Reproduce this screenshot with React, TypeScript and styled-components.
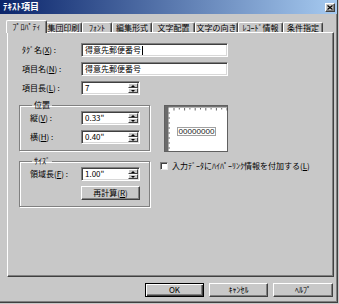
import React from 'react';
import styled, { createGlobalStyle, css } from 'styled-components';

const Global = createGlobalStyle`
  html, body { margin: 0; padding: 0; background: #c8c8c8; }
  body {
    font-family: "Noto Sans CJK JP", "Noto Sans", sans-serif;
    font-size: 8px;
    color: #000;
  }
  * { box-sizing: border-box; }
`;

const raised = css`
  border: 1px solid;
  border-color: #fff #404040 #404040 #fff;
  box-shadow: inset -1px -1px 0 #808080;
`;

const sunken = css`
  border: 1px solid;
  border-color: #808080 #fff #fff #808080;
  box-shadow: inset 1px 1px 0 #404040, inset -1px -1px 0 #d8d8d8;
`;

const Window = styled.div`
  width: 338px;
  height: 303px;
  background: #c8c8c8;
  display: flex;
  flex-direction: column;
  border-right: 1px solid #404040;
  border-bottom: 1px solid #404040;
  box-shadow: inset -1px -1px 0 #808080;
  overflow: hidden;
`;

const TitleBar = styled.div`
  height: 14px;
  flex: none;
  background: linear-gradient(to right, #0a246a, #a6caf0);
  display: flex;
  align-items: center;
  justify-content: space-between;
  padding: 0 2px 0 3px;
`;

const TitleText = styled.span`
  color: #fff;
  font-weight: bold;
  font-size: 9px;
  line-height: 12px;
`;

const CloseButton = styled.div`
  width: 10px;
  height: 9px;
  background: #c8c8c8;
  ${raised};
  display: flex;
  align-items: center;
  justify-content: center;
`;

const Body = styled.div`
  display: flex;
  flex-direction: column;
  padding: 6px 0 0 7px;
`;

const TabRow = styled.div`
  display: flex;
  align-items: flex-end;
  height: 12px;
  padding-left: 1px;
  position: relative;
  z-index: 1;
`;

const Tab = styled.div<{ $w: number; $active?: boolean }>`
  width: ${(p) => p.$w}px;
  height: 10px;
  flex: none;
  background: #c8c8c8;
  border-top: 1px solid #fff;
  border-left: 1px solid #fff;
  border-right: 1px solid #404040;
  box-shadow: inset -1px 0 0 #808080;
  border-radius: 2px 2px 0 0;
  display: flex;
  align-items: center;
  justify-content: center;
  line-height: 9px;
  white-space: nowrap;
  ${(p) =>
    p.$active &&
    css`
      width: ${p.$w + 4}px;
      margin: 0 -2px -1px;
      height: 13px;
      padding-bottom: 1px;
      position: relative;
      z-index: 2;
    `}
`;

const Panel = styled.div`
  width: 327px;
  height: 245px;
  ${raised};
  padding: 10px 0 0 11px;
  display: flex;
  flex-direction: column;
`;

const TopRows = styled.div`
  display: grid;
  grid-template-columns: 59px 147px;
  grid-auto-rows: 14px;
  row-gap: 5px;
  padding-left: 3px;
  align-items: center;
`;

const Label = styled.span`
  line-height: 10px;
  white-space: nowrap;
`;

const TextBox = styled.div<{ $w?: number }>`
  width: ${(p) => (p.$w ? `${p.$w}px` : '100%')};
  height: 14px;
  background: #fff;
  ${sunken};
  padding: 0 0 0 3px;
  display: flex;
  align-items: center;
  line-height: 10px;
  white-space: nowrap;
  overflow: hidden;
`;

const Caret = styled.span`
  display: inline-block;
  width: 1px;
  height: 9px;
  background: #000;
  margin-left: 1px;
`;

const SpinText = styled.span`
  flex: 1;
`;

const SpinCol = styled.div`
  width: 10px;
  height: 10px;
  margin-right: 1px;
  display: flex;
  flex-direction: column;
`;

const SpinBtn = styled.div<{ $down?: boolean }>`
  height: 5px;
  background: #c8c8c8;
  border: 1px solid;
  border-color: #fff #404040 #404040 #fff;
  display: flex;
  align-items: center;
  justify-content: center;
  &::after {
    content: '';
    width: 0;
    height: 0;
    border-left: 2px solid transparent;
    border-right: 2px solid transparent;
    ${(p) =>
      p.$down
        ? css`border-top: 2px solid #000;`
        : css`border-bottom: 2px solid #000;`}
  }
`;

const Lower = styled.div`
  display: grid;
  grid-template-columns: 131px auto;
  column-gap: 10px;
  row-gap: 4px;
  margin-top: 5px;
  align-items: start;
`;

const Group = styled.fieldset`
  margin: 0;
  min-width: 0;
  width: 131px;
  border: 1px solid #808080;
  box-shadow: 1px 1px 0 #fff, inset 1px 1px 0 #fff;
  padding: 1px 0 6px 10px;
  display: grid;
  grid-template-columns: 51px 59px;
  grid-auto-rows: 14px;
  row-gap: 5px;
  align-items: center;
`;

const Legend = styled.legend`
  padding: 0 2px;
  margin-left: 2px;
  line-height: 10px;
  height: 10px;
`;

const Button = styled.div<{ $w: number; $default?: boolean }>`
  width: ${(p) => p.$w}px;
  height: 14px;
  background: #c8c8c8;
  ${raised};
  display: flex;
  align-items: center;
  justify-content: center;
  line-height: 10px;
  white-space: nowrap;
  ${(p) =>
    p.$default &&
    css`
      border-color: #000;
      box-shadow: inset 1px 1px 0 #fff, inset -1px -1px 0 #404040, inset -2px -2px 0 #808080;
    `}
`;

const PreviewBox = styled.div`
  margin: 5px 0 0 4px;
  width: 64px;
  height: 47px;
  display: flex;
`;

const CheckRow = styled.label`
  margin-top: 5px;
  display: flex;
  align-items: center;
  gap: 4px;
  line-height: 10px;
  white-space: nowrap;
`;

const CheckBox = styled.span`
  width: 8px;
  height: 8px;
  flex: none;
  background: #fff;
  border: 1px solid;
  border-color: #808080 #e8e8e8 #e8e8e8 #808080;
  box-shadow: inset 1px 1px 0 #404040;
`;

const ButtonRow = styled.div`
  display: flex;
  justify-content: flex-end;
  gap: 5px;
  margin-top: 6px;
  width: 326px;
`;

const tabs = [
  { label: 'ﾌﾟﾛﾊﾟﾃｨ', w: 37, active: true },
  { label: '集団印刷', w: 37 },
  { label: 'ﾌｫﾝﾄ', w: 30 },
  { label: '編集形式', w: 40 },
  { label: '文字配置', w: 43 },
  { label: '文字の向き', w: 43 },
  { label: 'ﾚｺｰﾄﾞ情報', w: 45 },
  { label: '条件指定', w: 40 },
];

function Acc({ pre, k }: { pre: string; k: string }) {
  return (
    <Label>
      {pre}(<u>{k}</u>) :
    </Label>
  );
}

function Spin({ value }: { value: string }) {
  return (
    <TextBox $w={59}>
      <SpinText>{value}</SpinText>
      <SpinCol>
        <SpinBtn />
        <SpinBtn $down />
      </SpinCol>
    </TextBox>
  );
}

function Preview() {
  const topTicks = Array.from({ length: 11 }, (_, i) => 10 + i * 5.3);
  const leftTicks = Array.from({ length: 8 }, (_, i) => 8 + i * 5);
  return (
    <svg width="64" height="47" viewBox="0 0 64 47">
      <rect x="0.5" y="0.5" width="63" height="46" fill="#fff" stroke="#606060" />
      <rect x="1" y="1" width="62" height="1.5" fill="#707070" />
      <rect x="1" y="1" width="3.5" height="45" fill="#6a6a6a" />
      {topTicks.map((x, i) => (
        <line key={i} x1={x} y1="3" x2={x} y2={i % 2 ? 4.5 : 5.5} stroke="#404040" strokeWidth="0.8" />
      ))}
      {leftTicks.map((y, i) => (
        <line key={i} x1="4.5" y1={y} x2="6" y2={y} stroke="#404040" strokeWidth="0.8" />
      ))}
      <rect x="13.5" y="22.5" width="38" height="8" fill="#fff" stroke="#a0a0a0" />
      <text x="14.5" y="29.3" fontSize="7" fontFamily="Liberation Sans, sans-serif" fill="#202020" textLength="36" lengthAdjust="spacingAndGlyphs">
        00000000
      </text>
    </svg>
  );
}

export default function App() {
  return (
    <>
      <Global />
      <Window>
        <TitleBar>
          <TitleText>ﾃｷｽﾄ項目</TitleText>
          <CloseButton>
            <svg width="6" height="5" viewBox="0 0 6 5">
              <path d="M0.5 0.5 L5.5 4.5 M5.5 0.5 L0.5 4.5" stroke="#000" strokeWidth="1.2" />
            </svg>
          </CloseButton>
        </TitleBar>
        <Body>
          <TabRow>
            {tabs.map((t) => (
              <Tab key={t.label} $w={t.w} $active={t.active}>
                {t.label}
              </Tab>
            ))}
          </TabRow>
          <Panel>
            <TopRows>
              <Acc pre="ﾀｸﾞ名" k="X" />
              <TextBox>
                得意先郵便番号
                <Caret />
              </TextBox>
              <Acc pre="項目名" k="N" />
              <TextBox>得意先郵便番号</TextBox>
              <Acc pre="項目長" k="L" />
              <Spin value="7" />
            </TopRows>
            <Lower>
              <Group>
                <Legend>位置</Legend>
                <Acc pre="縦" k="V" />
                <Spin value={'0.33"'} />
                <Acc pre="横" k="H" />
                <Spin value={'0.40"'} />
              </Group>
              <PreviewBox>
                <Preview />
              </PreviewBox>
              <Group>
                <Legend>ｻｲｽﾞ</Legend>
                <Acc pre="領域長" k="F" />
                <Spin value={'1.00"'} />
                <span />
                <Button $w={59}>
                  再計算(<u>R</u>)
                </Button>
              </Group>
              <CheckRow>
                <CheckBox />
                <span>
                  入力ﾃﾞｰﾀにﾊｲﾊﾟｰﾘﾝｸ情報を付加する(<u>L</u>)
                </span>
              </CheckRow>
            </Lower>
          </Panel>
          <ButtonRow>
            <Button $w={59} $default>
              OK
            </Button>
            <Button $w={59}>ｷｬﾝｾﾙ</Button>
            <Button $w={60}>ﾍﾙﾌﾟ</Button>
          </ButtonRow>
        </Body>
      </Window>
    </>
  );
}
